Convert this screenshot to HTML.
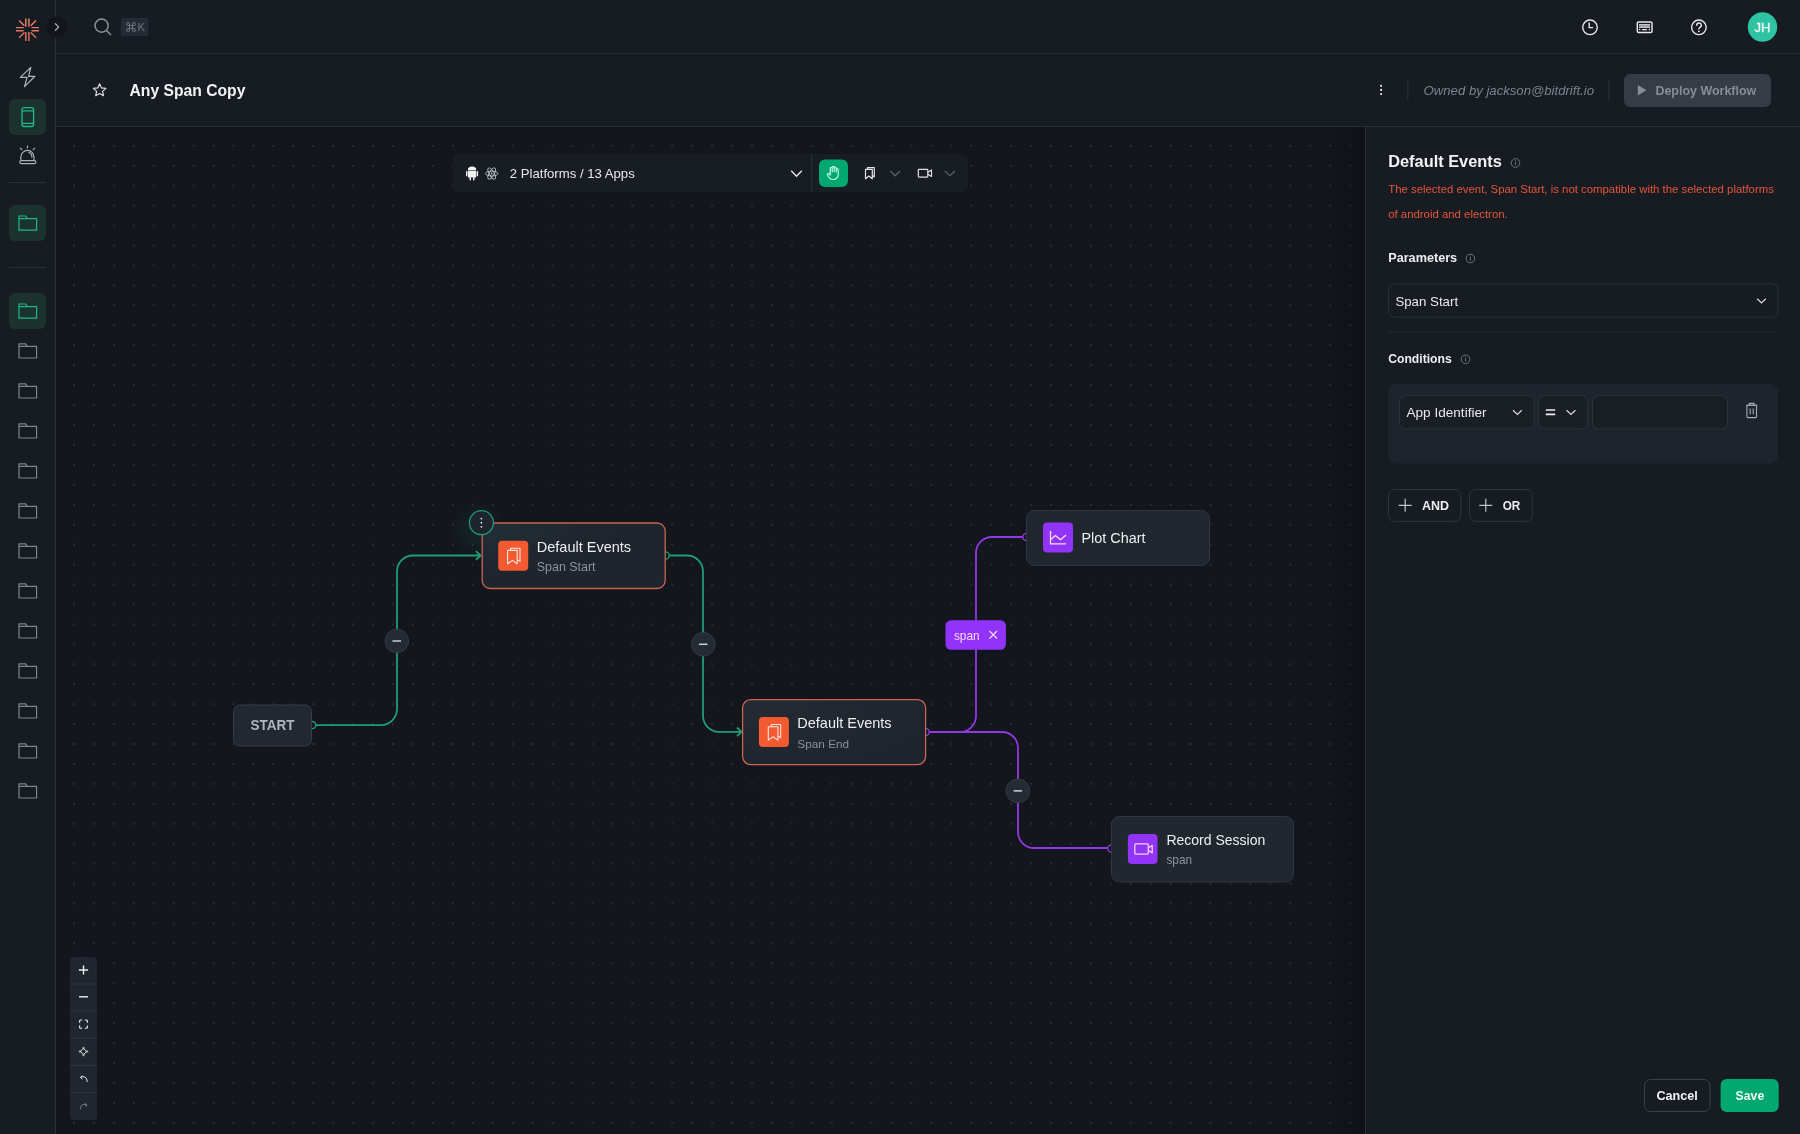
<!DOCTYPE html>
<html><head><meta charset="utf-8"><title>Any Span Copy</title>
<style>
html,body{margin:0;padding:0;background:#171c22;width:1800px;height:1134px;overflow:hidden}
svg{display:block;will-change:transform}
text{font-family:"Liberation Sans",sans-serif}
</style></head>
<body>
<svg width="1800" height="1134" viewBox="0 0 1800 1134">
<defs>
<pattern id="dots" patternUnits="userSpaceOnUse" x="64.03" y="135.83" width="19.94" height="19.94">
<circle cx="9.97" cy="9.97" r="1" fill="#2e333b"/>
</pattern>
<linearGradient id="logog" x1="0" y1="0" x2="0" y2="1">
<stop offset="0" stop-color="#ee8466"/><stop offset="1" stop-color="#d9685f"/>
</linearGradient>
<radialGradient id="nodeg" cx="0.05" cy="0.1" r="0.7">
<stop offset="0" stop-color="#213034"/><stop offset="0.6" stop-color="#20272f"/><stop offset="1" stop-color="#1f252d"/>
</radialGradient>
<radialGradient id="nodeg2" cx="0.15" cy="0.2" r="0.9">
<stop offset="0" stop-color="#232a32"/><stop offset="1" stop-color="#1f252d"/>
</radialGradient>
<radialGradient id="glow" cx="0.5" cy="0.5" r="0.5">
<stop offset="0" stop-color="#1d9c75" stop-opacity="0.13"/><stop offset="1" stop-color="#1d9c75" stop-opacity="0"/>
</radialGradient>
<linearGradient id="pshadow" x1="0" y1="0" x2="1" y2="0">
<stop offset="0" stop-color="#000" stop-opacity="0"/><stop offset="0.6" stop-color="#000" stop-opacity="0.06"/><stop offset="1" stop-color="#000" stop-opacity="0.2"/>
</linearGradient>
</defs>

<!-- base backgrounds -->
<rect x="0" y="0" width="1800" height="1134" fill="#171c22"/>
<!-- canvas -->
<rect x="56" y="127" width="1309" height="1007" fill="#13161c"/>
<rect x="56" y="127" width="1309" height="1007" fill="url(#dots)"/>
<rect x="1285" y="127" width="80" height="1007" fill="url(#pshadow)"/>
<!-- right panel -->
<rect x="1366" y="127" width="434" height="1007" fill="#171c22"/>
<!-- borders -->
<rect x="55" y="0" width="1" height="1134" fill="#2a2f37"/>
<rect x="56" y="53" width="1744" height="1" fill="#272c34"/>
<rect x="56" y="126" width="1744" height="1" fill="#2a2f37"/>
<rect x="1365" y="127" width="1" height="1007" fill="#2a2f37"/>

<!-- SIDEBAR -->
<g id="logo" stroke="url(#logog)" stroke-width="1.45" stroke-linecap="butt" fill="none">
<path d="M25.8 18.5V26.8M28.9 18.5V26.8M25.8 32V41M28.9 32V41M16 27.6H23.6M16 30.7H23.6M31.5 27.6H39M31.5 30.7H39M19.1 20.4L24.4 25.8M36 20.4L30.7 25.8M19.1 37.8L24.4 32.4M36 37.8L30.7 32.4"/>
</g>
<circle cx="56.5" cy="27" r="10.5" fill="#12151b"/>
<path d="M55 23.2L58.6 27L55 30.8" stroke="#9aa1aa" stroke-width="1.4" fill="none"/>

<path d="M30.8 67.4L20.3 77.4H27.1L24.5 86.6L34.9 76.3H28.6Z" stroke="#b0b6bd" stroke-width="1.2" fill="none" stroke-linejoin="round"/>
<rect x="9" y="99" width="37" height="36" rx="6" fill="#1c322f"/>
<rect x="22" y="107.6" width="11.6" height="18.9" rx="2.1" stroke="#21b784" stroke-width="1.35" fill="none"/>
<path d="M22 110.8H33.6M22 123.4H33.6" stroke="#21b784" stroke-width="1.2"/>
<g stroke="#a9b0b8" stroke-width="1.2" fill="none">
<path d="M20.9 160.4V157A6.55 6.55 0 0 1 34 157V160.4"/>
<rect x="19.9" y="160.6" width="15.9" height="3" rx="1.2"/>
<path d="M27.5 146V147.8M20.3 148.1L21.8 149.6M34.7 148.1L33.2 149.6M28.9 152.4A4.8 4.8 0 0 1 31.9 157.2" stroke-linecap="round"/>
</g>
<rect x="9" y="182" width="37" height="1" fill="#2b3038"/>
<rect x="9" y="205" width="37" height="36" rx="6" fill="#1c322f"/>
<rect x="9" y="267" width="37" height="1" fill="#2b3038"/>
<rect x="9" y="293" width="37" height="36" rx="6" fill="#1c322f"/>
<path transform="translate(19 216)" d="M0 14.2V0H6.6L8.4 2.6H17.6V14.2Z M0 2.6H8.4" fill="none" stroke="#21b784" stroke-width="1.2" stroke-linejoin="round"/>
<path transform="translate(19 304)" d="M0 14.2V0H6.6L8.4 2.6H17.6V14.2Z M0 2.6H8.4" fill="none" stroke="#21b784" stroke-width="1.2" stroke-linejoin="round"/>
<path transform="translate(19 343.8)" d="M0 14.2V0H6.6L8.4 2.6H17.6V14.2Z M0 2.6H8.4" fill="none" stroke="#7d848d" stroke-width="1.2" stroke-linejoin="round"/>
<path transform="translate(19 383.8)" d="M0 14.2V0H6.6L8.4 2.6H17.6V14.2Z M0 2.6H8.4" fill="none" stroke="#7d848d" stroke-width="1.2" stroke-linejoin="round"/>
<path transform="translate(19 423.8)" d="M0 14.2V0H6.6L8.4 2.6H17.6V14.2Z M0 2.6H8.4" fill="none" stroke="#7d848d" stroke-width="1.2" stroke-linejoin="round"/>
<path transform="translate(19 463.8)" d="M0 14.2V0H6.6L8.4 2.6H17.6V14.2Z M0 2.6H8.4" fill="none" stroke="#7d848d" stroke-width="1.2" stroke-linejoin="round"/>
<path transform="translate(19 503.8)" d="M0 14.2V0H6.6L8.4 2.6H17.6V14.2Z M0 2.6H8.4" fill="none" stroke="#7d848d" stroke-width="1.2" stroke-linejoin="round"/>
<path transform="translate(19 543.8)" d="M0 14.2V0H6.6L8.4 2.6H17.6V14.2Z M0 2.6H8.4" fill="none" stroke="#7d848d" stroke-width="1.2" stroke-linejoin="round"/>
<path transform="translate(19 583.8)" d="M0 14.2V0H6.6L8.4 2.6H17.6V14.2Z M0 2.6H8.4" fill="none" stroke="#7d848d" stroke-width="1.2" stroke-linejoin="round"/>
<path transform="translate(19 623.8)" d="M0 14.2V0H6.6L8.4 2.6H17.6V14.2Z M0 2.6H8.4" fill="none" stroke="#7d848d" stroke-width="1.2" stroke-linejoin="round"/>
<path transform="translate(19 663.8)" d="M0 14.2V0H6.6L8.4 2.6H17.6V14.2Z M0 2.6H8.4" fill="none" stroke="#7d848d" stroke-width="1.2" stroke-linejoin="round"/>
<path transform="translate(19 703.8)" d="M0 14.2V0H6.6L8.4 2.6H17.6V14.2Z M0 2.6H8.4" fill="none" stroke="#7d848d" stroke-width="1.2" stroke-linejoin="round"/>
<path transform="translate(19 743.8)" d="M0 14.2V0H6.6L8.4 2.6H17.6V14.2Z M0 2.6H8.4" fill="none" stroke="#7d848d" stroke-width="1.2" stroke-linejoin="round"/>
<path transform="translate(19 783.8)" d="M0 14.2V0H6.6L8.4 2.6H17.6V14.2Z M0 2.6H8.4" fill="none" stroke="#7d848d" stroke-width="1.2" stroke-linejoin="round"/>

<!-- TOP BAR -->
<g stroke="#8a929b" stroke-width="1.5" fill="none">
<circle cx="101.6" cy="25.6" r="6.6"/>
<path d="M106.4 30.4L111 35"/>
</g>
<rect x="121" y="18" width="27.5" height="18" rx="2" fill="#252b35"/>
<g stroke="#6b747e" stroke-width="1" fill="none">
<path d="M129.5 24V30M132.5 24V30M128 25.5H134M128 28.5H134"/>
<path d="M129.5 25.5H128A1.5 1.5 0 1 1 129.5 24Z M132.5 25.5V24A1.5 1.5 0 1 1 134 25.5Z M129.5 28.5V30A1.5 1.5 0 1 1 128 28.5Z M132.5 28.5H134A1.5 1.5 0 1 1 132.5 30Z"/>
</g>
<text x="137.6" y="31" font-size="11.4" fill="#6b747e">K</text>

<!-- right header icons -->
<g stroke="#e6e8ea" stroke-width="1.4" fill="none">
<circle cx="1590" cy="27.3" r="7.3"/>
<path d="M1589.2 22.5V27.6H1593.2"/>
<rect x="1637.3" y="21.9" width="14.7" height="10.5" rx="1.2" stroke-width="1.45"/>
<circle cx="1698.9" cy="27.3" r="7.3"/>
<path d="M1696.7 25.3A2.3 2.3 0 1 1 1699.8 27.4C1699.1 27.8 1698.9 28.2 1698.9 29" stroke-linecap="round"/>
</g>
<circle cx="1698.9" cy="31.3" r="0.9" fill="#e6e8ea"/>
<rect x="1639" y="24" width="11" height="4" fill="#9da2a8"/>
<rect x="1639" y="24" width="11" height="0.9" fill="#c4c8cc"/>
<rect x="1639" y="27.1" width="11" height="0.9" fill="#c4c8cc"/>
<circle cx="1639.6" cy="29.6" r="0.75" fill="#f0f1f2"/><circle cx="1649.4" cy="29.6" r="0.75" fill="#f0f1f2"/>
<rect x="1642" y="29" width="5" height="1.2" rx="0.6" fill="#f0f1f2"/>
<circle cx="1762.5" cy="27" r="14.7" fill="#2ec3a2"/>
<text x="1762.5" y="31.5" font-size="13" fill="#eefaf6" text-anchor="middle" stroke="#eefaf6" stroke-width="0.35">JH</text>

<!-- TITLE BAR -->
<path d="M99.60 83.80L101.42 87.89L105.88 88.36L102.55 91.36L103.48 95.74L99.60 93.50L95.72 95.74L96.65 91.36L93.32 88.36L97.78 87.89Z" stroke="#d9dcdf" stroke-width="1.2" fill="none" stroke-linejoin="round"/>
<text x="129.5" y="96" font-size="15.7" font-weight="bold" fill="#f2f3f5">Any Span Copy</text>

<g fill="#e6e8ea"><circle cx="1381.1" cy="85.8" r="1.1"/><circle cx="1381.1" cy="89.9" r="1.1"/><circle cx="1381.1" cy="94" r="1.1"/></g>
<rect x="1407.3" y="79.7" width="1" height="21" fill="#2b3039"/>
<text x="1423.6" y="95" font-size="13.15" font-style="italic" fill="#7b838c">Owned by jackson@bitdrift.io</text>
<rect x="1608.3" y="79.3" width="1" height="21.5" fill="#2b3039"/>
<rect x="1624" y="74" width="147" height="33" rx="6" fill="#363c45"/>
<path d="M1637.8 85V95.4L1646.5 90.2Z" fill="#868d96"/>
<text x="1655.4" y="94.8" font-size="12.48" font-weight="bold" fill="#868d96">Deploy Workflow</text>

<!-- CANVAS TOOLBAR -->
<rect x="453" y="154" width="515" height="38" rx="6" fill="#181c23"/>
<g fill="#f1f2f3">
<path d="M467.8 170.2A4.25 3.6 0 0 1 476.3 170.2Z"/>
<rect x="467.8" y="170.8" width="8.5" height="6.8" rx="0.6"/>
<rect x="466" y="171" width="1.3" height="5.2" rx="0.6"/>
<rect x="476.8" y="171" width="1.3" height="5.2" rx="0.6"/>
<rect x="469.5" y="177" width="1.5" height="3.5" rx="0.7"/>
<rect x="473" y="177" width="1.5" height="3.5" rx="0.7"/>
</g>
<g stroke="#b9bec4" stroke-width="0.9" fill="none">
<ellipse cx="491.7" cy="173.5" rx="6.3" ry="2.4"/>
<ellipse cx="491.7" cy="173.5" rx="6.3" ry="2.4" transform="rotate(60 491.7 173.5)"/>
<ellipse cx="491.7" cy="173.5" rx="6.3" ry="2.4" transform="rotate(120 491.7 173.5)"/>
</g>
<circle cx="491.7" cy="173.5" r="0.9" fill="#b9bec4"/>
<text x="509.8" y="177.8" font-size="13.15" fill="#e6e8ea">2 Platforms / 13 Apps</text>
<path d="M791.2 170.8L796.5 176.2L801.8 170.8" stroke="#e6e8ea" stroke-width="1.4" fill="none"/>
<rect x="811.2" y="154" width="1" height="38" fill="#2c323b"/>
<rect x="819" y="159.6" width="29" height="27.4" rx="6" fill="#03a870"/>
<g stroke="#bdf8e0" stroke-width="1.2" fill="none" stroke-linecap="round" stroke-linejoin="round">
<path d="M830.2 172.5V168.3A1 1 0 0 1 832.2 168.3V172M832.2 171V167.3A1 1 0 0 1 834.2 167.3V171.5M834.2 171V168A1 1 0 0 1 836.2 168V172M836.2 171V169.5A1 1 0 0 1 838.2 169.5V174.5A5 5 0 0 1 833.2 179.5H832.7A4.5 4.5 0 0 1 829 177.5L827.6 175.2A1 1 0 0 1 829.2 174L830.2 175V172"/>
</g>
<g stroke="#e0e3e6" stroke-width="1.2" fill="none" stroke-linejoin="round">
<path d="M865.5 169.4H872.3V178.8L868.9 176L865.5 178.8Z"/>
<path d="M867.5 169.4V167.6H874.3V177L872.3 175.4"/>
</g>
<path d="M890.2 171L895.1 175.8L900 171" stroke="#5b626c" stroke-width="1.2" fill="none"/>
<g stroke="#e0e3e6" stroke-width="1.2" fill="none" stroke-linejoin="round">
<rect x="918.3" y="169.3" width="9.5" height="7.8" rx="0.8"/>
<path d="M927.8 172.2L931.5 170V176.4L927.8 174.2"/>
</g>
<path d="M944.8 171L949.9 175.8L955 171" stroke="#5b626c" stroke-width="1.2" fill="none"/>

<!-- EDGES -->
<g fill="none" stroke-width="1.8">
<path d="M313 725.1H381A16 16 0 0 0 397 709.1V571.5A16 16 0 0 1 413 555.5H480" stroke="#1f9e76"/>
<path d="M476 551.2L480.6 555.5L476 559.8" stroke="#1f9e76" stroke-linejoin="round"/>
<path d="M666 555.5H687A16 16 0 0 1 703 571.5V715.8A16 16 0 0 0 719 731.8H741" stroke="#1f9e76"/>
<path d="M737 727.5L741.6 731.8L737 736.1" stroke="#1f9e76" stroke-linejoin="round"/>
<path d="M926 732H960A16 16 0 0 0 976 716V553A16 16 0 0 1 992 537H1026" stroke="#9139e6"/>
<path d="M926 732H1002A16 16 0 0 1 1018 748V832A16 16 0 0 0 1034 848H1111" stroke="#9139e6"/>
</g>
<!-- handles -->
<g stroke-width="1.3" fill="#13161c">
<circle cx="312.2" cy="725.1" r="3.6" stroke="#1f9e76"/>
<circle cx="665.6" cy="555.5" r="3.6" stroke="#1f9e76"/>
<circle cx="925.6" cy="732" r="3.6" stroke="#9139e6"/>
<circle cx="1026.4" cy="537" r="3.6" stroke="#9139e6"/>
<circle cx="1111.4" cy="848.5" r="3.6" stroke="#9139e6"/>
</g>
<!-- minus buttons -->
<g>
<circle cx="396.8" cy="641" r="11.8" fill="#252b33" stroke="#353b44" stroke-width="1"/>
<path d="M392.5 641H401" stroke="#cdd1d6" stroke-width="1.5"/>
<circle cx="703.3" cy="644.3" r="11.8" fill="#252b33" stroke="#353b44" stroke-width="1"/>
<path d="M699 644.3H707.5" stroke="#cdd1d6" stroke-width="1.5"/>
<circle cx="1017.9" cy="790.9" r="11.8" fill="#252b33" stroke="#353b44" stroke-width="1"/>
<path d="M1013.6 790.9H1022.1" stroke="#cdd1d6" stroke-width="1.5"/>
</g>
<!-- span label -->
<rect x="945.5" y="620.2" width="60.4" height="29.6" rx="5.5" fill="#9233fb"/>
<text x="953.9" y="639.7" font-size="11.85" fill="#f7dcfc">span</text>
<path d="M989.5 631L997 638.5M997 631L989.5 638.5" stroke="#f7dcfc" stroke-width="1.15"/>

<!-- NODES -->
<g id="start">
<rect x="233.5" y="705" width="78" height="41" rx="6.5" fill="#222830" stroke="#363d47" stroke-width="1"/>
<text x="250.5" y="730.2" font-size="14.2" font-weight="bold" fill="#adb5be" textLength="44" lengthAdjust="spacingAndGlyphs">START</text>
</g>
<circle cx="478" cy="530" r="30" fill="url(#glow)"/>
<g id="node1">
<rect x="482.2" y="523" width="183" height="65.5" rx="8" fill="url(#nodeg)" stroke="#c9654e" stroke-width="1.3"/>
<rect x="498.2" y="540.8" width="30" height="30" rx="4" fill="#f45a32"/>
<path transform="translate(507.6 548.2)" d="M0 2.2H9.6V15.6L4.8 12.2L0 15.6Z M3 2.2V0H12.4V13.2L9.6 11.4" fill="none" stroke="#fbe6df" stroke-width="1.1" stroke-linejoin="round"/>
<text x="536.8" y="551.5" font-size="14.5" fill="#eceef0">Default Events</text>
<text x="536.8" y="571" font-size="12.45" fill="#8b929b">Span Start</text>
<circle cx="481.4" cy="522.7" r="12" fill="#1f252d" stroke="#24987a" stroke-width="1.25"/>
<g fill="#e6e8ea"><circle cx="481.4" cy="518.6" r="0.9"/><circle cx="481.4" cy="522.7" r="0.9"/><circle cx="481.4" cy="526.8" r="0.9"/></g>
</g>
<g id="node2">
<rect x="742.6" y="699.6" width="183" height="65" rx="8" fill="url(#nodeg2)" stroke="#c9654e" stroke-width="1.3"/>
<rect x="758.9" y="717.1" width="30" height="30" rx="4" fill="#f45a32"/>
<path transform="translate(768.3 724.5)" d="M0 2.2H9.6V15.6L4.8 12.2L0 15.6Z M3 2.2V0H12.4V13.2L9.6 11.4" fill="none" stroke="#fbe6df" stroke-width="1.1" stroke-linejoin="round"/>
<text x="797.3" y="727.9" font-size="14.5" fill="#eceef0">Default Events</text>
<text x="797.3" y="747.5" font-size="11.8" fill="#8b929b">Span End</text>
</g>
<g id="node3">
<rect x="1026.5" y="510.5" width="183" height="55" rx="8" fill="#20272f" stroke="#2f3641" stroke-width="1"/>
<rect x="1043" y="522.6" width="30" height="30" rx="4" fill="#9234f8"/>
<path d="M1050.5 531V543.9H1066M1050.5 539.7L1055.4 535.4L1060.5 539.7L1066 535" stroke="#fbdcfb" stroke-width="1.3" fill="none" stroke-linejoin="round"/>
<text x="1081.5" y="542.8" font-size="14.39" fill="#eceef0">Plot Chart</text>
</g>
<g id="node4">
<rect x="1111.5" y="816.5" width="182" height="65.5" rx="8" fill="#20272f" stroke="#2f3641" stroke-width="1"/>
<rect x="1127.9" y="834" width="29.6" height="29.9" rx="4" fill="#9234f8"/>
<g stroke="#f8d2fb" stroke-width="1.25" fill="none" stroke-linejoin="round">
<rect x="1134.8" y="843.9" width="13.5" height="10.2" rx="1"/>
<path d="M1148.3 847.9L1152.2 845.3V852.9L1148.3 850.3"/>
</g>
<text x="1166.4" y="844.7" font-size="14.03" fill="#eceef0">Record Session</text>
<text x="1166.4" y="864.3" font-size="11.85" fill="#8b929b">span</text>
</g>

<!-- ZOOM CONTROLS -->
<rect x="70" y="957" width="27" height="163" rx="4" fill="#20262f"/>
<g fill="#2f353e">
<rect x="70" y="983.5" width="27" height="1"/><rect x="70" y="1010.3" width="27" height="1"/><rect x="70" y="1037.6" width="27" height="1"/><rect x="70" y="1065" width="27" height="1"/><rect x="70" y="1092.2" width="27" height="1"/>
</g>
<g stroke="#eef0f2" stroke-width="1.4" fill="none">
<path d="M83.5 965.4V974.6M78.9 970H88.1"/>
<path d="M79 996.8H88"/>
<path d="M79.6 1022.7V1021A1 1 0 0 1 80.6 1020H82.1M84.9 1020H86.4A1 1 0 0 1 87.4 1021V1022.7M87.4 1025.5V1027.2A1 1 0 0 1 86.4 1028.2H84.9M82.1 1028.2H80.6A1 1 0 0 1 79.6 1027.2V1025.5" stroke-width="1.1"/>
<path d="M83.5 1048.3L86.7 1051.5L83.5 1054.7L80.3 1051.5Z" stroke-width="0.9"/><circle cx="83.5" cy="1048" r="0.8" stroke-width="0.7"/><circle cx="87" cy="1051.5" r="0.8" stroke-width="0.7"/><circle cx="83.5" cy="1055" r="0.8" stroke-width="0.7"/><circle cx="80" cy="1051.5" r="0.8" stroke-width="0.7"/>
<path d="M80.5 1077.5A4 4 0 0 1 87 1080.5V1082M80.5 1077.5L82.2 1075.6M80.5 1077.5L82.5 1079" stroke-width="1"/>
</g>
<path d="M87 1105.2A4 4 0 0 0 80.5 1108.2V1109.5M87 1105.2L85.3 1103.3M87 1105.2L85 1106.7" stroke="#767d86" stroke-width="1" fill="none"/>

<!-- RIGHT PANEL -->
<text x="1388.2" y="167.4" font-size="16.36" font-weight="bold" fill="#f2f3f5">Default Events</text>
<g stroke="#767d86" stroke-width="0.9" fill="none"><circle cx="1515.5" cy="163" r="4.3"/></g>
<path d="M1515.5 161.8V165.2" stroke="#767d86" stroke-width="0.9"/><circle cx="1515.5" cy="160.6" r="0.5" fill="#767d86"/>
<text x="1388.2" y="193.2" font-size="11.38" fill="#e5553b">The selected event, Span Start, is not compatible with the selected platforms</text>
<text x="1388.2" y="218" font-size="11.38" fill="#e5553b">of android and electron.</text>

<text x="1388.2" y="261.9" font-size="12.66" font-weight="bold" fill="#eceef0">Parameters</text>
<g stroke="#767d86" stroke-width="0.9" fill="none"><circle cx="1470.4" cy="258.5" r="4.3"/><path d="M1470.4 257.3V260.7"/></g><circle cx="1470.4" cy="256.1" r="0.5" fill="#767d86"/>
<rect x="1388.7" y="283.9" width="389.3" height="33.3" rx="6" fill="#171c22" stroke="#2a3039" stroke-width="1"/>
<text x="1395.4" y="305.5" font-size="13.27" fill="#e6e8ea">Span Start</text>
<path d="M1757.2 298.8L1761.5 303L1765.8 298.8" stroke="#d9dcdf" stroke-width="1.2" fill="none"/>

<rect x="1388" y="331.6" width="390" height="1" fill="#262b33"/>

<text x="1388.2" y="363.3" font-size="12.18" font-weight="bold" fill="#eceef0">Conditions</text>
<g stroke="#767d86" stroke-width="0.9" fill="none"><circle cx="1465.6" cy="359.3" r="4.3"/><path d="M1465.6 358.1V361.5"/></g><circle cx="1465.6" cy="356.9" r="0.5" fill="#767d86"/>
<rect x="1388" y="384" width="390" height="79.5" rx="8" fill="#1f242c"/>
<rect x="1399.5" y="395.5" width="134.8" height="33.5" rx="6" fill="#1a1e25" stroke="#2c323b" stroke-width="1"/>
<text x="1406.5" y="416.9" font-size="13.58" fill="#e6e8ea">App Identifier</text>
<path d="M1513 410.3L1517.4 414.5L1521.8 410.3" stroke="#d9dcdf" stroke-width="1.2" fill="none"/>
<rect x="1538.6" y="395.5" width="49" height="33.5" rx="6" fill="#1a1e25" stroke="#2c323b" stroke-width="1"/>
<path d="M1545.8 410H1555.2M1545.8 414.4H1555.2" stroke="#eceef0" stroke-width="1.6"/>
<path d="M1566.6 410.3L1571 414.5L1575.4 410.3" stroke="#d9dcdf" stroke-width="1.2" fill="none"/>
<rect x="1592.5" y="395.5" width="135" height="33.5" rx="6" fill="#1a1e25" stroke="#2c323b" stroke-width="1"/>
<g stroke="#a6acb3" stroke-width="1.1" fill="none">
<path d="M1746 405.2H1757.4M1749.4 405.2V403.4H1754V405.2"/>
<rect x="1746.9" y="405.2" width="9.6" height="12.4" rx="1"/>
<path d="M1750.2 408.5V414.3M1753.2 408.5V414.3"/>
</g>

<rect x="1388.5" y="489.5" width="72.3" height="31.8" rx="6" fill="#171c22" stroke="#2f353e" stroke-width="1"/>
<path d="M1405.2 498.8V511.8M1398.7 505.3H1411.7" stroke="#bfc4ca" stroke-width="1.2"/>
<text x="1422" y="509.9" font-size="12.46" font-weight="bold" fill="#eceef0">AND</text>
<rect x="1469.5" y="489.5" width="62.8" height="31.8" rx="6" fill="#171c22" stroke="#2f353e" stroke-width="1"/>
<path d="M1485.8 498.8V511.8M1479.3 505.3H1492.3" stroke="#bfc4ca" stroke-width="1.2"/>
<text x="1502.7" y="509.9" font-size="12.46" font-weight="bold" fill="#eceef0" textLength="17.6" lengthAdjust="spacingAndGlyphs">OR</text>

<rect x="1644.5" y="1079.5" width="65.5" height="32" rx="6" fill="#171c22" stroke="#3a404a" stroke-width="1"/>
<text x="1656.4" y="1100" font-size="12.63" font-weight="bold" fill="#f2f3f5">Cancel</text>
<rect x="1720.6" y="1079" width="58.1" height="33" rx="6" fill="#03a870"/>
<text x="1735.6" y="1100" font-size="12.25" font-weight="bold" fill="#effaf5">Save</text>

</svg>
</body></html>
